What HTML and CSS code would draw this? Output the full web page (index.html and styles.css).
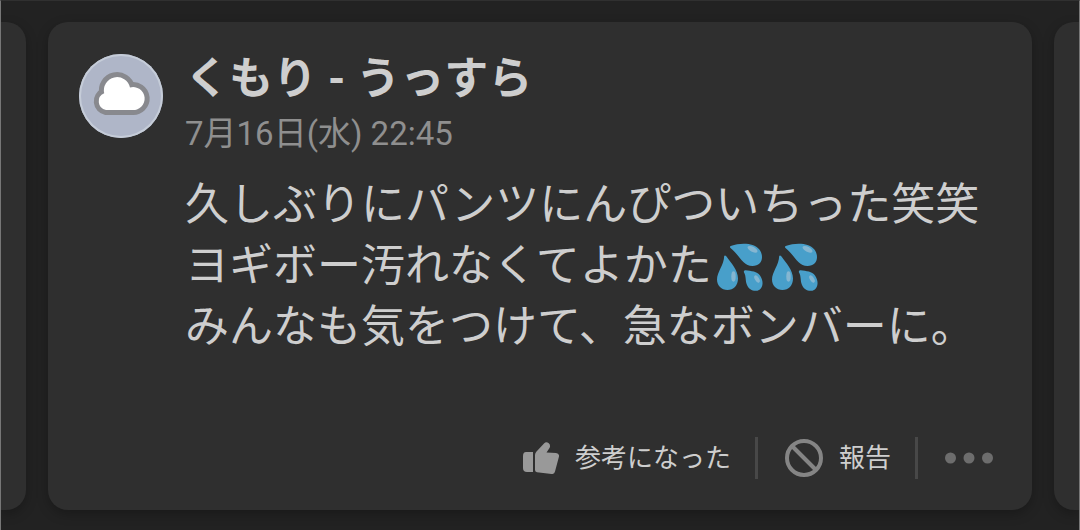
FILE: index.html
```html
<!DOCTYPE html>
<html lang="ja">
<head>
    <meta charset="UTF-8">
    <meta name="viewport" content="width=device-width, initial-scale=1.0">
    <title>くもり - うっすら</title>
    <link rel="stylesheet" href="styles.css">
</head>
<body>
    <main class="carousel">
        <div class="card peek peek-left"></div>

        <article class="card review">
            <div class="avatar">
                <svg viewBox="0 0 84 84" aria-hidden="true">
                    <path class="cloud" d="M27 56A8.8 8.8 0 0 1 25.200 39.200A13 13 0 0 1 51 33.500A11.500 11.500 0 1 1 53 56Z"/>
                </svg>
            </div>

            <div class="content">
                <h1 class="title">くもり - うっすら</h1>
                <time class="date" datetime="2025-07-16T22:45">7月16日(水) 22:45</time>

                <p class="text">
                    久しぶりにパンツにんぴついちった笑笑<br>
                    ヨギボー汚れなくてよかた<svg class="emoji" viewBox="0 0 55 52" role="img" aria-label="汗"><use href="#drops"/></svg><svg class="emoji" viewBox="0 0 55 52" role="img" aria-label="汗"><use href="#drops"/></svg><br>
                    みんなも気をつけて、急なボンバーに。
                </p>

                <div class="actions">
                    <button class="action" type="button">
                        <svg class="icon-like" viewBox="0 0 36 32" aria-hidden="true">
                            <path d="M3 10H10V30H4Q0 30 0 26V14Q0 10 3 10Z"/>
                            <path d="M12 13Q12 11 13.5 9.5L21 1.5Q23 -.5 25.5 1Q28 3 26.5 6L23.5 10.5L33 11Q36.5 11.5 36 14.5L32 29.5Q31.4 32.3 28.5 32L14 30.2Q12 30 12 28Z"/>
                        </svg>
                        <span>参考になった</span>
                    </button>
                    <span class="divider"></span>
                    <button class="action" type="button">
                        <svg class="icon-report" viewBox="0 0 38 38" aria-hidden="true">
                            <circle cx="19" cy="19" r="17"/>
                            <path d="M7 7L31 31"/>
                        </svg>
                        <span>報告</span>
                    </button>
                    <span class="divider"></span>
                    <button class="action" type="button" aria-label="その他">
                        <svg class="icon-more" viewBox="0 0 48 12" aria-hidden="true">
                            <circle cx="5.5" cy="6" r="5.5"/>
                            <circle cx="24" cy="6" r="5.5"/>
                            <circle cx="42.5" cy="6" r="5.5"/>
                        </svg>
                    </button>
                </div>
            </div>
        </article>

        <div class="card peek peek-right"></div>
    </main>

    <svg class="defs" aria-hidden="true">
        <symbol id="drops" viewBox="0 0 55 52">
            <g fill="#489fca">
                <path d="M10.2 15Q11 13.8 12.5 15.5C17 22 24 29 24 37.5C24 44.5 19.5 49 13.5 49C7.5 49 3 44.5 3 38.5C3 31 10 24 10.2 15Z"/>
                <path d="M16.5 7C15.5 6 16 5.2 17.5 4.8C23 2.5 33 2 38.5 4C44.5 6 48 10.5 48 16C48 21.5 44.5 25 38.5 25C28.5 25 26 14.5 16.5 7Z"/>
                <path d="M29.8 31Q29.5 29.2 31.5 29.3C37.5 30 43 30.5 46 34.5C49.5 39.5 49.5 46 45.5 48.7C41 51.5 35 49 33 44C31 39.5 32.5 35.5 29.8 31Z"/>
            </g>
            <g fill="#85b6d1">
                <ellipse cx="19.5" cy="35.5" rx="2.2" ry="5.2"/>
                <ellipse cx="38.5" cy="8.3" rx="5.5" ry="2.5" transform="rotate(28 38.5 8.3)"/>
                <ellipse cx="43" cy="38" rx="2.1" ry="4" transform="rotate(-32 43 38)"/>
            </g>
        </symbol>
    </svg>
</body>
</html>
```

FILE: styles.css
```css
* {
    box-sizing: border-box;
}

body {
    margin: 0;
    background-color: #222;
    color: #cecece;
    font-family: Roboto, "Noto Sans CJK JP", sans-serif;
}

.carousel {
    display: flex;
    gap: 22px;
    min-height: 100vh;
    padding: 21px 0 20px;
    overflow: hidden;
    border-top: 1px solid #303030;
    border-left: 1px solid #777;
    border-right: 1px solid #777;
}

.card {
    background-color: #2f2f2f;
    border-radius: 20px;
    box-shadow: 0 4px 12px rgba(0, 0, 0, 0.25);
}

.peek {
    flex: 0 0 25px;
}

.peek-left {
    border-top-left-radius: 0;
    border-bottom-left-radius: 0;
}

.peek-right {
    border-top-right-radius: 0;
    border-bottom-right-radius: 0;
}

.review {
    flex: 1;
    display: flex;
    gap: 22px;
    padding: 32px 32px 31px 31px;
}

.avatar {
    flex: none;
    width: 84px;
    height: 84px;
    border-radius: 50%;
    background-color: #afb6c8;
    box-shadow: inset 0 0 0 2px #c5ccd8;
}

.avatar svg {
    display: block;
}

.cloud {
    fill: #fff;
    stroke: #88898e;
    stroke-width: 10;
    stroke-linejoin: round;
    paint-order: stroke;
}

.content {
    flex: 1;
    display: flex;
    flex-direction: column;
}

.title {
    margin: 0;
    font-size: 44px;
    font-weight: 700;
    line-height: 50px;
}

.date {
    margin-top: 6px;
    color: #8f8f8f;
    font-size: 33px;
    line-height: 48px;
}

.text {
    margin: 17px 0 79px;
    font-size: 44px;
    line-height: 61px;
}

.emoji {
    width: 55px;
    height: 52px;
    margin: -4px 0 0 2px;
    vertical-align: middle;
}

.emoji + .emoji {
    margin-left: 0;
}

/* Rodapé com as ações */
.actions {
    display: flex;
    justify-content: flex-end;
    align-items: center;
    margin-top: auto;
    padding-right: 7px;
}

.action {
    display: flex;
    align-items: center;
    gap: 16px;
    padding: 0;
    border: none;
    background: none;
    color: inherit;
    font-family: inherit;
    font-size: 26px;
    line-height: 42px;
    cursor: pointer;
}

.divider {
    width: 3px;
    height: 42px;
    margin: 0 27px 0 24px;
    background-color: #484848;
}

.icon-like {
    width: 36px;
    height: 32px;
    fill: #999;
}

.icon-report {
    width: 38px;
    height: 38px;
    fill: none;
    stroke: #858585;
    stroke-width: 4;
}

.icon-more {
    width: 48px;
    height: 12px;
    fill: #6d6d6d;
}

.defs {
    display: none;
}
```
